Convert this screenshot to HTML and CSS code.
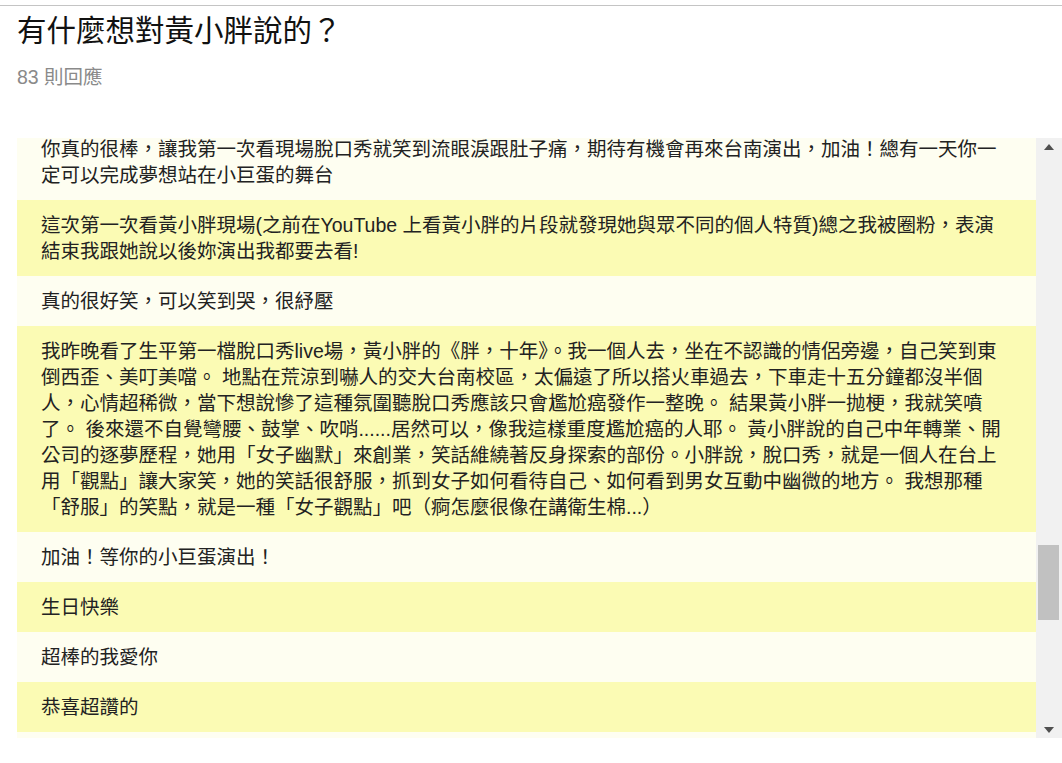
FILE: index.html
```html
<!DOCTYPE html>
<html lang="zh-Hant">
<head>
    <meta charset="UTF-8">
    <meta name="viewport" content="width=device-width, initial-scale=1.0">
    <title>有什麼想對黃小胖說的？</title>
    <link rel="stylesheet" href="styles.css">
</head>
<body>

<div class="page">
    <header class="header">
        <h1 class="title">有什麼想對黃小胖說的？</h1>
        <p class="count">83 則回應</p>
    </header>

    <div class="board">
        <div class="viewport">
            <ul class="replies">
                <li class="reply">你真的很棒，讓我第一次看現場脫口秀就笑到流眼淚跟肚子痛，期待有機會再來台南演出，加油！總有一天你一定可以完成夢想站在小巨蛋的舞台</li>
                <li class="reply">這次第一次看黃小胖現場(之前在YouTube 上看黃小胖的片段就發現她與眾不同的個人特質)總之我被圈粉，表演結束我跟她說以後妳演出我都要去看!</li>
                <li class="reply">真的很好笑，可以笑到哭，很紓壓</li>
                <li class="reply">我昨晚看了生平第一檔脫口秀live場，黃小胖的《胖，十年》。我一個人去，坐在不認識的情侶旁邊，自己笑到東倒西歪、美叮美噹。 地點在荒涼到嚇人的交大台南校區，太偏遠了所以搭火車過去，下車走十五分鐘都沒半個人，心情超稀微，當下想說慘了這種氛圍聽脫口秀應該只會尷尬癌發作一整晚。 結果黃小胖一抛梗，我就笑噴了。 後來還不自覺彎腰、鼓掌、吹哨......居然可以，像我這樣重度尷尬癌的人耶。 黃小胖說的自己中年轉業、開公司的逐夢歷程，她用「女子幽默」來創業，笑話維繞著反身探索的部份。小胖說，脫口秀，就是一個人在台上用「觀點」讓大家笑，她的笑話很舒服，抓到女子如何看待自己、如何看到男女互動中幽微的地方。 我想那種「舒服」的笑點，就是一種「女子觀點」吧（痾怎麼很像在講衛生棉...）</li>
                <li class="reply">加油！等你的小巨蛋演出！</li>
                <li class="reply">生日快樂</li>
                <li class="reply">超棒的我愛你</li>
                <li class="reply">恭喜超讚的</li>
                <li class="reply">謝謝你帶給我們這麼多歡笑</li>
            </ul>
        </div>
        <div class="scrollbar">
            <span class="arrow arrow-up"></span>
            <div class="track"><div class="thumb"></div></div>
            <span class="arrow arrow-down"></span>
        </div>
    </div>
</div>

</body>
</html>
```

FILE: styles.css
```css
body {
    margin: 0;
    font-family: "Liberation Sans", "Noto Sans CJK TC", sans-serif;
    background-color: #fff;
    color: #222;
}
.page {
    padding-top: 5px;
}
.header {
    border-top: 1px solid #c4c4c4;
    padding-left: 17px;
}
.title {
    margin: 7px 0 0;
    font-size: 29.5px;
    line-height: 36px;
    font-weight: normal;
    color: #111;
}
.count {
    margin: 15px 0 0;
    font-size: 19.5px;
    line-height: 26px;
    color: #8a8a8a;
}
.board {
    display: flex;
    margin: 48px 0 0 17px;
    height: 600px;
}
.viewport {
    flex: 1;
    overflow: hidden;
}
.replies {
    list-style: none;
    margin: -14px 0 0;
    padding: 0;
}
.reply {
    padding: 12px 24px;
    font-size: 19.5px;
    line-height: 26px;
    color: #222;
    background-color: #fefef1;
}
.reply:nth-child(even) {
    background-color: #fbfbb4;
}
.scrollbar {
    width: 26px;
    display: flex;
    flex-direction: column;
    background-color: #f1f1f1;
}
.arrow {
    height: 17px;
    display: flex;
    justify-content: center;
    align-items: center;
}
.arrow::before {
    content: "";
    border-left: 5.5px solid transparent;
    border-right: 5.5px solid transparent;
}
.arrow-up::before {
    border-bottom: 6px solid #505050;
}
.arrow-down::before {
    border-top: 6px solid #505050;
}
.track {
    flex: 1;
}
.thumb {
    margin: 390px 3px 0 2px;
    height: 75px;
    background-color: #c1c1c1;
}
```
